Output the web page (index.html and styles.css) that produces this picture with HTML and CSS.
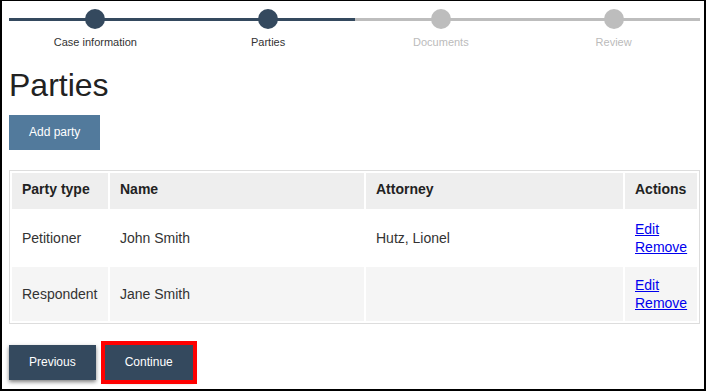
FILE: index.html
```html
<!DOCTYPE html>
<html lang="en">
<head>
    <meta charset="UTF-8">
    <meta name="viewport" content="width=device-width, initial-scale=1.0">
    <title>Parties</title>
    <link rel="stylesheet" href="styles.css">
</head>
<body>
    <div class="frame">
        <ol class="steps">
            <li class="step done"><span class="dot"></span><span class="label">Case information</span></li>
            <li class="step done"><span class="dot"></span><span class="label">Parties</span></li>
            <li class="step"><span class="dot"></span><span class="label">Documents</span></li>
            <li class="step"><span class="dot"></span><span class="label">Review</span></li>
        </ol>

        <h1>Parties</h1>
        <button class="btn btn-light">Add party</button>

        <table class="parties">
            <thead>
                <tr>
                    <th class="col-type">Party type</th>
                    <th class="col-name">Name</th>
                    <th class="col-attorney">Attorney</th>
                    <th class="col-actions">Actions</th>
                </tr>
            </thead>
            <tbody>
                <tr>
                    <td>Petitioner</td>
                    <td>John Smith</td>
                    <td>Hutz, Lionel</td>
                    <td><a href="#">Edit</a><br><a href="#">Remove</a></td>
                </tr>
                <tr>
                    <td>Respondent</td>
                    <td>Jane Smith</td>
                    <td></td>
                    <td><a href="#">Edit</a><br><a href="#">Remove</a></td>
                </tr>
            </tbody>
        </table>

        <div class="nav">
            <button class="btn btn-dark">Previous</button>
            <button class="btn btn-dark highlight">Continue</button>
        </div>
    </div>
</body>
</html>
```

FILE: styles.css
```css
html, body {
    margin: 0;
    height: 100%;
}

body {
    font-family: "Liberation Sans", Arial, sans-serif;
    color: #333;
    background: #fff;
}

.frame {
    box-sizing: border-box;
    height: 100vh;
    border: 2px solid #000;
    border-top-width: 1px;
    padding: 0 4px 0 7px;
}

/* progress steps */
.steps {
    list-style: none;
    margin: 0;
    padding: 8px 0 0;
    display: grid;
    grid-template-columns: repeat(4, 1fr);
}

.step {
    position: relative;
    display: flex;
    flex-direction: column;
    align-items: center;
}

.step::before {
    content: "";
    position: absolute;
    left: 0;
    right: 0;
    top: 9px;
    height: 3px;
    background: #bdbdbd;
}

.step.done::before {
    background: #34495e;
}

.dot {
    position: relative;
    width: 20px;
    height: 20px;
    border-radius: 50%;
    background: #bdbdbd;
}

.done .dot {
    background: #34495e;
}

.label {
    margin-top: 7px;
    font-size: 11px;
    line-height: 13px;
    color: #bbb;
}

.done .label {
    color: #333;
}

h1 {
    margin: 18px 0 12px;
    font-size: 32px;
    line-height: 36px;
    font-weight: normal;
    color: #222;
}

.btn {
    font-family: inherit;
    font-size: 12px;
    line-height: 15px;
    padding: 10px 20px;
    border: none;
    color: #fff;
    cursor: pointer;
}

.btn-light {
    background-color: #527a9c;
}

.btn-dark {
    background-color: #34495e;
    box-shadow: 0 2px 4px rgba(0, 0, 0, 0.5);
}

.highlight {
    outline: 4px solid #f00;
}

/* parties table */
.parties {
    width: 100%;
    table-layout: fixed;
    margin-top: 20px;
    border: 1px solid #ddd;
    border-spacing: 2px;
    font-size: 14px;
    line-height: 18px;
}

.parties th,
.parties td {
    box-sizing: border-box;
    padding: 9px 10px;
    text-align: left;
    vertical-align: middle;
}

.parties th {
    padding: 7px 10px 11px;
    background: #eee;
    color: #222;
}

.parties tbody tr:nth-child(2) td {
    background: #f5f5f5;
}

.col-type { width: 96px; }
.col-name { width: 254px; }
.col-attorney { width: 257px; }
.col-actions { width: 72px; }

.parties a {
    color: #0000ee;
}

.nav {
    display: flex;
    gap: 9px;
    margin-top: 21px;
}
```
